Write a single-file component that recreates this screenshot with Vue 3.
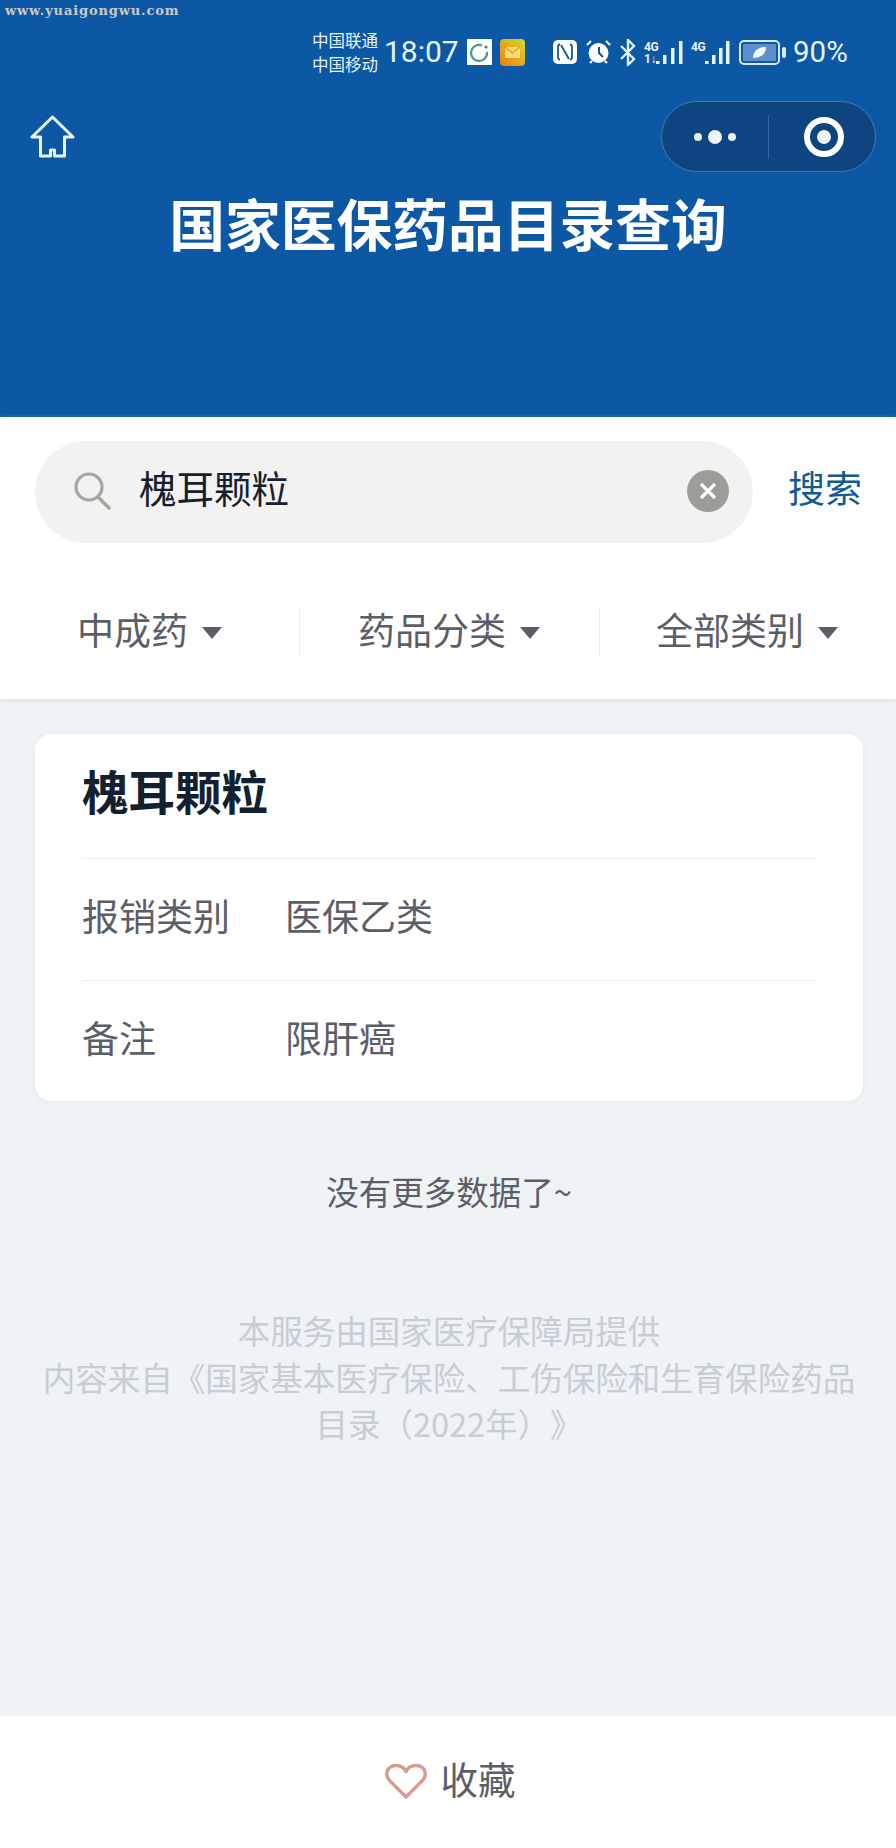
<script setup>
const filters = [
  { label: '中成药', cls: 'f1' },
  { label: '药品分类', cls: 'f2' },
  { label: '全部类别', cls: 'f3' }
]
const rows = [
  { k: '报销类别', v: '医保乙类' },
  { k: '备注', v: '限肝癌' }
]
</script>

<template>
  <div class="page">
    <header class="hero">
      <div class="mark">www.yuaigongwu.com</div>
      <div class="status">
        <div class="carriers"><span>中国联通</span><span>中国移动</span></div>
        <span class="time">18:07</span>
        <svg class="s-app" width="25" height="26" viewBox="0 0 25 26">
          <rect width="25" height="26" fill="#fff" />
          <path d="M15 6.500a8 8 0 1 0 5 6.500" fill="none" stroke="#4d9a86" stroke-width="2.200" />
          <circle cx="19" cy="8" r="1.600" fill="#3d8a78" />
        </svg>
        <svg class="s-mail" width="25" height="27" viewBox="0 0 25 27">
          <defs>
            <linearGradient id="mg" x1="0" y1="1" x2="1" y2="0">
              <stop offset="0" stop-color="#ee7d12" />
              <stop offset="1" stop-color="#d6d92c" />
            </linearGradient>
          </defs>
          <rect width="25" height="27" rx="4" fill="url(#mg)" />
          <rect x="5" y="8" width="15" height="11" fill="#f7d976" />
          <path d="M5 8l7.500 6L20 8" fill="none" stroke="#ec9a2b" stroke-width="1.400" />
        </svg>
        <svg class="s-nfc" width="24" height="24" viewBox="0 0 24 24">
          <rect width="24" height="24" rx="5" fill="#fff" />
          <path d="M7 4.500c-1.500 0-2 1-2 2.500v10c0 1.500.5 2.500 2 2.500M17 4.500c1.500 0 2 1 2 2.500v10c0 1.500-.5 2.500-2 2.500M8 5l8 14" fill="none" stroke="#0d58a5" stroke-width="1.800" />
        </svg>
        <svg class="s-alarm" width="27" height="26" viewBox="0 0 27 26">
          <circle cx="13.500" cy="14" r="10" fill="#fff" />
          <path d="M14 8v6l4 4" fill="none" stroke="#0d58a5" stroke-width="2" />
          <path d="M2 6l4-4M25 6l-4-4M5 24l2-2M22 24l-2-2" stroke="#fff" stroke-width="2" />
        </svg>
        <svg class="s-bt" width="17" height="27" viewBox="0 0 17 27">
          <path d="M2 7l13 13-6 6V1l6 6L2 20" fill="none" stroke="#dff0fa" stroke-width="2.400" />
        </svg>
        <div class="signal">
          <div class="net"><b>4G</b><b>1↓</b></div>
          <svg width="27" height="23" viewBox="0 0 27 23"><path d="M0 20h3.500v3H0zM7 14h3.500v9H7zM15 7h3.500v16H15zM23 0h3.500v23H23z" fill="#e6f3fb" /></svg>
        </div>
        <div class="signal second">
          <div class="net"><b>4G</b></div>
          <svg width="25" height="23" viewBox="0 0 25 23"><path d="M0 20h3.500v3H0zM7 14h3.500v9H7zM14 7h3.500v16H14zM21 0h3.500v23H21z" fill="#e6f3fb" /></svg>
        </div>
        <svg class="s-bat" width="47" height="25" viewBox="0 0 47 25">
          <rect x="1" y="1" width="39" height="23" rx="4" fill="none" stroke="#d6ebf7" stroke-width="2" />
          <rect x="4" y="4" width="33" height="17" rx="1" fill="#5e8fca" />
          <path d="M14 18c0-8 7-11 13-11 0 7-5 11-13 11z" fill="#eef6fb" />
          <rect x="43" y="7" width="4" height="11" rx="2" fill="#d6ebf7" />
        </svg>
        <span class="pct">90%</span>
      </div>
      <div class="nav">
        <svg class="home" width="45" height="43" viewBox="0 0 45 43">
          <path d="M22.500 2L2 22h8.500v19h10v-6h4v6h10V22H43z" fill="none" stroke="#e9f5fb" stroke-width="3" stroke-linejoin="round" />
        </svg>
        <div class="capsule">
          <div class="dots"><i></i><i class="big"></i><i></i></div>
          <div class="cap-line"></div>
          <div class="ring"><i></i></div>
        </div>
      </div>
      <h1 class="title">国家医保药品目录查询</h1>
    </header>

    <section class="controls">
      <div class="search-row">
        <div class="search">
          <svg class="lens" width="40" height="40" viewBox="0 0 40 40">
            <circle cx="17" cy="16" r="13" fill="none" stroke="#a5a69c" stroke-width="3.200" />
            <path d="M26 26l11 11" stroke="#a5a69c" stroke-width="3.600" stroke-linecap="round" />
          </svg>
          <span class="query">槐耳颗粒</span>
          <div class="clear">
            <svg width="18" height="18" viewBox="0 0 18 18"><path d="M2 2l14 14M16 2L2 16" stroke="#fff" stroke-width="3.200" /></svg>
          </div>
        </div>
        <span class="search-btn">搜索</span>
      </div>
      <div class="filters">
        <div v-for="f in filters" :key="f.label" class="filter" :class="f.cls">
          <span>{{ f.label }}</span><i class="tri"></i>
        </div>
      </div>
    </section>

    <main class="body">
      <article class="card">
        <h2 class="name">槐耳颗粒</h2>
        <div v-for="r in rows" :key="r.k" class="row">
          <span class="key">{{ r.k }}</span><span class="val">{{ r.v }}</span>
        </div>
      </article>
      <p class="nomore">没有更多数据了~</p>
      <p class="source">本服务由国家医疗保障局提供<br />内容来自《国家基本医疗保险、工伤保险和生育保险药品目录（2022年）》</p>
    </main>

    <footer class="bar">
      <svg class="heart" width="42" height="37" viewBox="0 0 42 37">
        <path d="M21 34L4 17C-1 10 3 2.500 11 2.500c4 0 8 2 10 6 2-4 6-6 10-6 8 0 12 7.500 7 14.500z" fill="none" stroke="#d99b92" stroke-width="3.400" stroke-linejoin="round" />
      </svg>
      <span class="fav">收藏</span>
    </footer>
  </div>
</template>

<style>
html, body { margin: 0; background: #fff; }
</style>

<style scoped>
.page {
  width: 896px;
  height: 1848px;
  display: flex;
  flex-direction: column;
  overflow: hidden;
  font-family: "Noto Sans CJK SC", "Noto Sans", sans-serif;
  text-spacing-trim: space-all;
  background: #eef3f6;
}
.hero {
  position: relative;
  height: 417px;
  flex: none;
  background: #0d58a5;
  color: #fff;
}
.mark {
  position: absolute;
  left: 5px;
  top: 3px;
  font: bold 13px/16px "DejaVu Serif", serif;
  letter-spacing: 0.85px;
  color: #c9c9c9;
}
.status {
  height: 104px;
  box-sizing: border-box;
  padding-left: 312px;
  display: flex;
  align-items: center;
  color: #e6f3fb;
}
.status svg { flex: none; }
.carriers {
  display: flex;
  flex-direction: column;
  font-size: 16.500px;
  line-height: 24px;
  width: 70px;
  flex: none;
}
.time {
  width: 73px;
  margin-left: 2px;
  flex: none;
  font: 400 30px/36px Roboto, sans-serif;
}
.s-app { margin-left: 10px; }
.s-mail { margin-left: 8px; }
.s-nfc { margin-left: 28px; }
.s-alarm { margin-left: 8px; }
.s-bt { margin-left: 7px; }
.signal {
  display: flex;
  align-items: flex-end;
  margin-left: 8px;
}
.net {
  display: flex;
  flex-direction: column;
  width: 14px;
  height: 23px;
}
.net b {
  font: 700 12px/12px Roboto, sans-serif;
  letter-spacing: -0.5px;
  white-space: nowrap;
}
.signal:not(.second) { width: 39px; }
.signal:not(.second) .net { width: 12px; }
.s-bat { margin-left: 9px; }
.pct {
  margin-left: 7px;
  font: 400 29.500px/34px Roboto, sans-serif;
}
.nav {
  height: 71px;
  margin-top: -3px;
  padding: 0 20px 0 30px;
  display: flex;
  align-items: center;
  justify-content: space-between;
}
.home { margin-top: -1px; }
.capsule {
  width: 215px;
  height: 71px;
  box-sizing: border-box;
  border: 1px solid #3f7ab8;
  border-radius: 36px;
  background: #0d4580;
  display: flex;
  align-items: center;
}
.dots {
  width: 106px;
  display: flex;
  align-items: center;
  justify-content: center;
  gap: 6px;
}
.dots i { width: 8px; height: 8px; border-radius: 50%; background: #eef5fb; }
.dots i.big { width: 14px; height: 14px; }
.cap-line { width: 1px; height: 44px; background: #2f6aa8; }
.ring {
  flex: 1;
  padding-left: 4px;
  display: flex;
  align-items: center;
  justify-content: center;
}
.ring i {
  width: 28px;
  height: 28px;
  border: 6px solid #fff;
  border-radius: 50%;
  display: flex;
  align-items: center;
  justify-content: center;
}
.ring i::after {
  content: "";
  width: 14px;
  height: 14px;
  border-radius: 50%;
  background: #eef5fb;
}
.title {
  margin: 14px 0 0;
  text-align: center;
  font-size: 55.750px;
  line-height: 72px;
  font-weight: 700;
}
.controls {
  height: 282px;
  flex: none;
  background: #fff;
  box-shadow: 0 1px 4px rgba(190, 205, 210, 0.5);
  position: relative;
}
.search-row {
  padding: 24px 0 0 35px;
  display: flex;
  align-items: center;
}
.search {
  width: 718px;
  height: 102px;
  box-sizing: border-box;
  border-radius: 51px;
  background: #f2f2f2;
  display: flex;
  align-items: center;
  padding: 0 24px 0 37px;
}
.lens { margin-top: -3px; }
.query {
  margin-left: 27px;
  font-size: 37.500px;
  line-height: 44px;
  color: #16202c;
  flex: 1;
  margin-top: -10px;
}
.clear {
  width: 42px;
  height: 42px;
  margin-top: -2px;
  border-radius: 50%;
  background: #9b9d96;
  display: flex;
  align-items: center;
  justify-content: center;
}
.search-btn {
  margin-left: 35px;
  margin-top: -10px;
  font-size: 37px;
  line-height: 44px;
  color: #115a96;
  white-space: nowrap;
}
.filters {
  margin-top: 64px;
  height: 48px;
  display: flex;
  align-items: center;
}
.filter {
  height: 48px;
  box-sizing: border-box;
  padding-bottom: 4px;
  display: flex;
  align-items: center;
  font-size: 37px;
  color: #5c5e67;
  white-space: nowrap;
}
.f1 { width: 300px; padding-left: 77px; border-right: 1px solid #eceef0; }
.f2 { width: 300px; padding-left: 58px; border-right: 1px solid #eceef0; }
.f3 { width: 295px; padding-left: 56px; }
.tri {
  margin-left: 14px;
  margin-top: 8px;
  width: 0;
  height: 0;
  border-left: 10px solid transparent;
  border-right: 10px solid transparent;
  border-top: 12px solid #5c5e67;
}
.body { flex: 1; min-height: 0; padding: 35px 33px 0 35px; }
.card {
  background: #fff;
  border-radius: 16px;
  padding: 0 47px;
  height: 367px;
  box-sizing: border-box;
  box-shadow: 0 1px 4px rgba(200, 212, 218, 0.4);
}
.name {
  margin: 0;
  height: 124px;
  box-sizing: border-box;
  padding-top: 26px;
  font-size: 46.500px;
  line-height: 60px;
  font-weight: 700;
  color: #13202f;
}
.row {
  height: 112px;
  padding-bottom: 9px;
  border-top: 1px solid #ebeef0;
  display: flex;
  align-items: center;
  font-size: 37px;
  color: #5c5e67;
}
.key { width: 203px; flex: none; }
.nomore {
  margin: 70px 0 0;
  text-align: center;
  font-size: 32.500px;
  line-height: 40px;
  color: #5c5e67;
}
.source {
  margin: 96px 0 0;
  width: 828px;
  text-align: center;
  font-size: 32.500px;
  line-height: 46.500px;
  color: #c5cdd5;
}
.bar {
  height: 132px;
  flex: none;
  background: #fff;
  display: flex;
  align-items: center;
  justify-content: center;
  gap: 14px;
  padding-left: 4px;
  font-size: 37.500px;
  color: #5c5e67;
}
.heart { margin-top: -2px; }
.fav { margin-top: -10px; }
</style>
